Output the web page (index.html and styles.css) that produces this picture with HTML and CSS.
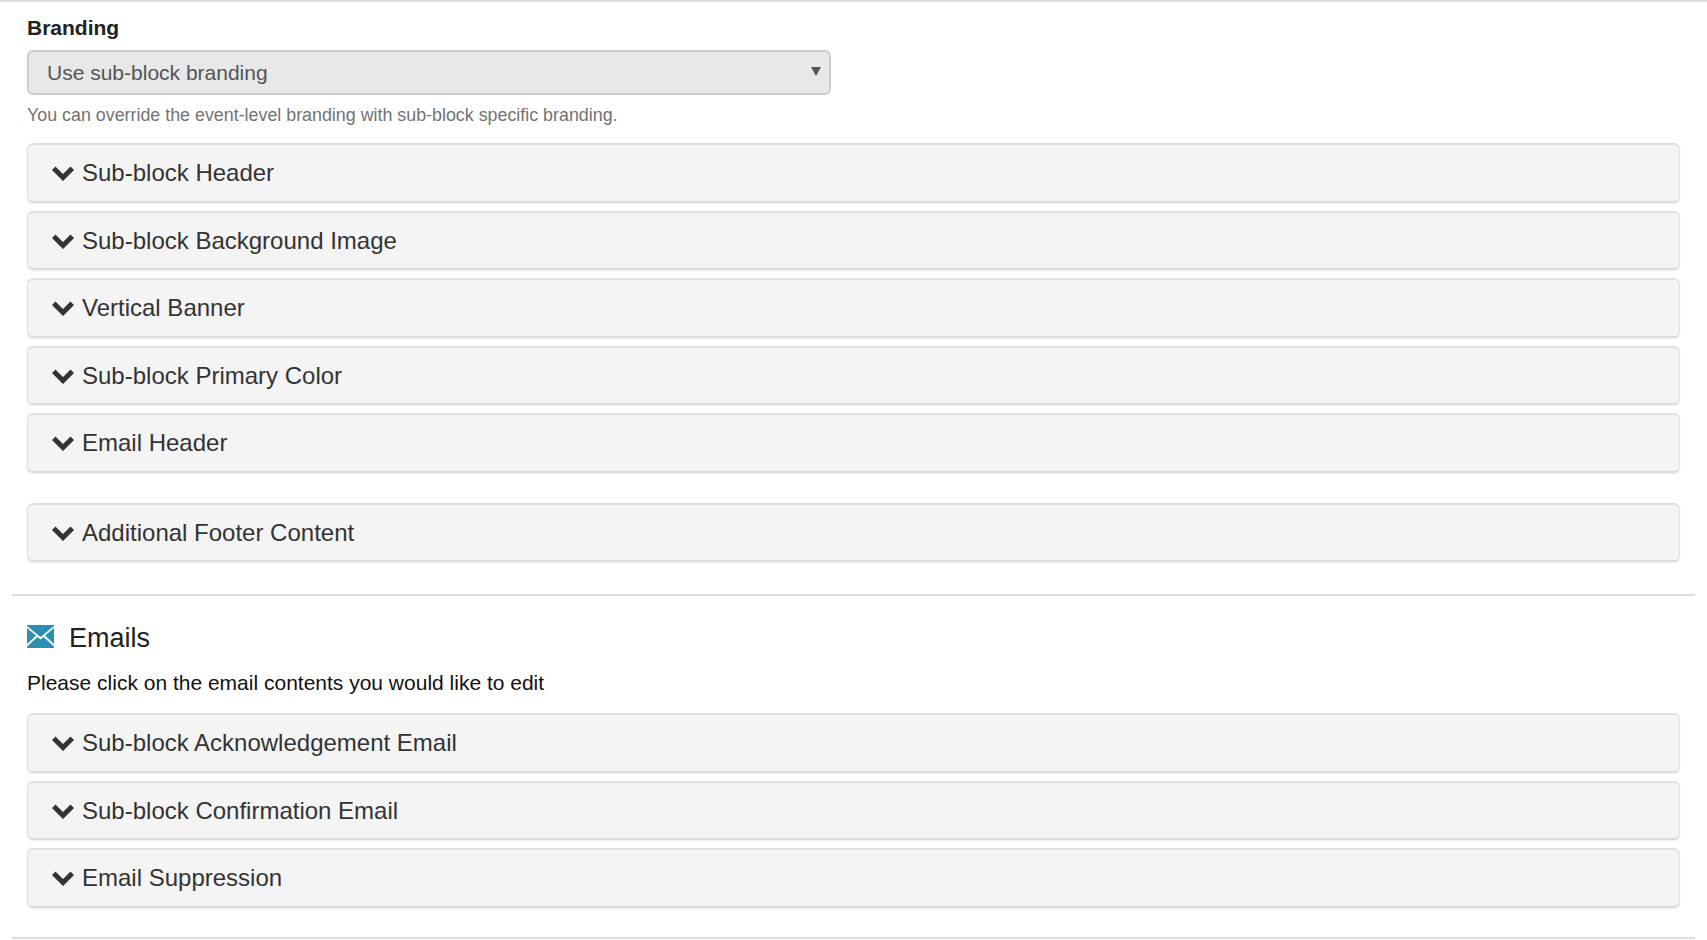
FILE: index.html
```html
<!DOCTYPE html>
<html lang="en">
<head>
<meta charset="utf-8">
<title>Branding and Emails</title>
<link rel="stylesheet" href="styles.css">
</head>
<body>
<main class="page">
  <section class="section section-branding">
    <label class="field-label">Branding</label>
    <div class="select"><span>Use sub-block branding</span><i class="caret"></i></div>
    <p class="help">You can override the event-level branding with sub-block specific branding.</p>
    <div class="panel"><svg class="chev" viewBox="0 0 22 15"><path d="M0 4 3.500 .5 11 8 18.500 .5 22 4 11 15Z"/></svg>Sub-block Header</div>
    <div class="panel"><svg class="chev" viewBox="0 0 22 15"><path d="M0 4 3.500 .5 11 8 18.500 .5 22 4 11 15Z"/></svg>Sub-block Background Image</div>
    <div class="panel"><svg class="chev" viewBox="0 0 22 15"><path d="M0 4 3.500 .5 11 8 18.500 .5 22 4 11 15Z"/></svg>Vertical Banner</div>
    <div class="panel"><svg class="chev" viewBox="0 0 22 15"><path d="M0 4 3.500 .5 11 8 18.500 .5 22 4 11 15Z"/></svg>Sub-block Primary Color</div>
    <div class="panel"><svg class="chev" viewBox="0 0 22 15"><path d="M0 4 3.500 .5 11 8 18.500 .5 22 4 11 15Z"/></svg>Email Header</div>
    <div class="panel panel-apart"><svg class="chev" viewBox="0 0 22 15"><path d="M0 4 3.500 .5 11 8 18.500 .5 22 4 11 15Z"/></svg>Additional Footer Content</div>
  </section>
  <section class="section section-emails">
    <h2 class="title"><svg class="mail" viewBox="0 0 27 23"><path d="M0 0H27V1L13.500 12 0 1Z"/><path d="M0 3 9 10.500 0 19Z"/><path d="M27 3 18 10.500 27 19Z"/><path d="M0 23V21.500L10.500 12 13.500 14.500 16.500 12 27 21.500V23Z"/></svg>Emails</h2>
    <p class="intro">Please click on the email contents you would like to edit</p>
    <div class="panel"><svg class="chev" viewBox="0 0 22 15"><path d="M0 4 3.500 .5 11 8 18.500 .5 22 4 11 15Z"/></svg>Sub-block Acknowledgement Email</div>
    <div class="panel"><svg class="chev" viewBox="0 0 22 15"><path d="M0 4 3.500 .5 11 8 18.500 .5 22 4 11 15Z"/></svg>Sub-block Confirmation Email</div>
    <div class="panel"><svg class="chev" viewBox="0 0 22 15"><path d="M0 4 3.500 .5 11 8 18.500 .5 22 4 11 15Z"/></svg>Email Suppression</div>
  </section>
</main>
</body>
</html>
```
FILE: styles.css
```css
* { box-sizing: border-box; }
html, body { margin: 0; padding: 0; height: 940px; overflow: hidden; background: #fff; }
body { font-family: "Liberation Sans", Arial, sans-serif; color: #222; }
.page { padding: 0 12px; }
.section { padding: 0 15px; border-top: 2px solid #ddd; margin: 0 -12px; }
.section-emails { margin: 32px 0 0; height: 345px; border-bottom: 2px solid #ddd; padding-top: 26px; }
.section-branding { padding: 14px 27px 0; }
.field-label { display: block; font-size: 21px; line-height: 24px; font-weight: bold; color: #222; height: 34px; }
.select { position: relative; display: flex; align-items: center; width: 804px; height: 45px; padding: 0 18px; background: #e8e8e8; border: 2px solid #ccc; border-radius: 6px; font-size: 21px; color: #555; }
.caret { position: absolute; right: 8px; top: 15px; width: 0; height: 0; border-left: 5px solid transparent; border-right: 5px solid transparent; border-top: 9px solid #555; }
.help { margin: 8px 0 16px; font-size: 17.850px; line-height: 24px; color: #737373; }
.panel { display: flex; align-items: center; height: 59.500px; margin-bottom: 8px; padding: 1px 0 0 24px; background: #f4f4f4; border: 1px solid #e0e0e0; border-top: 2px solid #e0e0e0; border-bottom: 2px solid #dcdcdc; border-radius: 6px; box-shadow: 0 1px 2px rgba(0,0,0,.08); font-size: 24px; color: #333; }
.panel-apart { margin-top: 30px; margin-bottom: 0; }
.chev { width: 22px; height: 15px; margin: 1px 8px 0 0; flex: none; fill: #333; }
.title { display: flex; align-items: center; margin: 0; font-size: 27px; font-weight: normal; line-height: 32px; color: #222; }
.mail { width: 27px; height: 23px; margin: 0 15px 3px 0; fill: #2a8fb1; }
.intro { margin: 15px 0 16px; font-size: 21px; line-height: 28px; color: #111; }
```
